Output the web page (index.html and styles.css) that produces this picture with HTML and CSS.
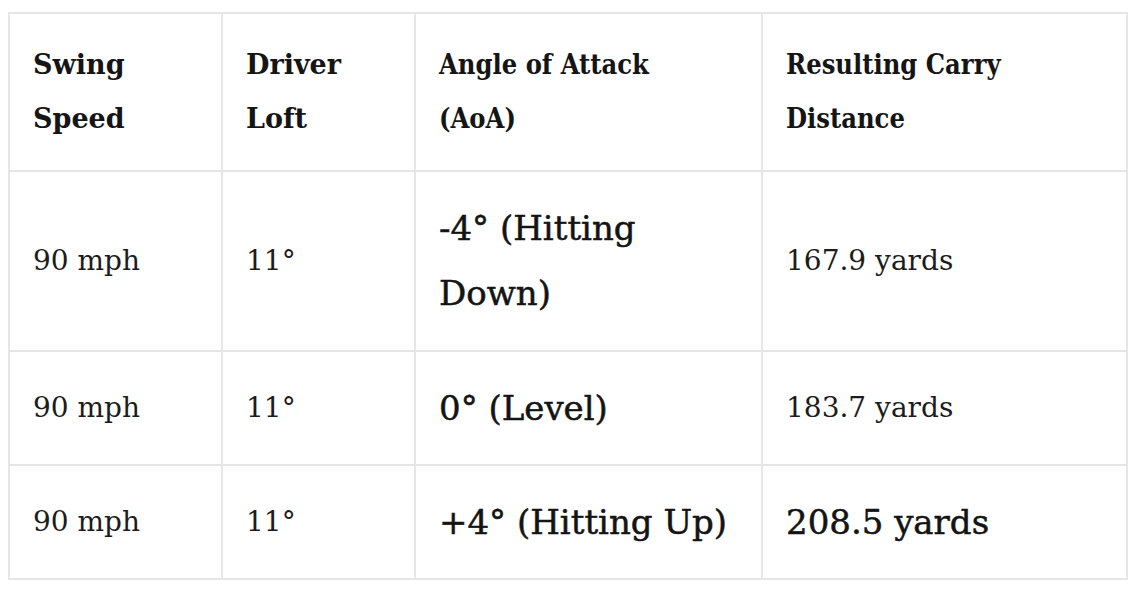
FILE: index.html
```html
<!DOCTYPE html>
<html lang="en">
<head>
<meta charset="utf-8">
<title>Angle of Attack</title>
<link rel="stylesheet" href="styles.css">
</head>
<body>
<table class="data">
  <colgroup>
    <col class="c1"><col class="c2"><col class="c3"><col class="c4">
  </colgroup>
  <thead>
    <tr>
      <th>Swing<br>Speed</th>
      <th>Driver<br>Loft</th>
      <th class="narrow">Angle of Attack<br>(AoA)</th>
      <th class="narrow">Resulting Carry<br>Distance</th>
    </tr>
  </thead>
  <tbody>
    <tr class="tall">
      <td>90 mph</td>
      <td>11°</td>
      <td class="big">-4° (Hitting<br>Down)</td>
      <td>167.9 yards</td>
    </tr>
    <tr class="short">
      <td>90 mph</td>
      <td>11°</td>
      <td class="big">0° (Level)</td>
      <td>183.7 yards</td>
    </tr>
    <tr class="short">
      <td>90 mph</td>
      <td>11°</td>
      <td class="big">+4° (Hitting Up)</td>
      <td class="big">208.5 yards</td>
    </tr>
  </tbody>
</table>
</body>
</html>
```
FILE: styles.css
```css
html, body {
  background: #ffffff;
}
body {
  margin: 12px 8px 8px 8px;
  font-family: "DejaVu Serif", "Liberation Serif", serif;
  color: #1c1c1c;
}
.data {
  width: 1118px;
  border-collapse: collapse;
  table-layout: fixed;
}
.c1 { width: 213px; }
.c2 { width: 193px; }
.c3 { width: 347px; }
.c4 { width: 365px; }
.data th,
.data td {
  border: 2px solid #e6e6e6;
  padding: 22px 23px;
  text-align: left;
  vertical-align: middle;
}
.data th {
  font-size: 27px;
  font-weight: bold;
  line-height: 54px;
  color: #151515;
}
.data th.narrow {
  font-family: "DejaVu Serif Condensed", "DejaVu Serif", serif;
  font-stretch: condensed;
}
.data td {
  font-size: 28px;
  line-height: 64px;
  font-variant-numeric: oldstyle-nums;
}
.data td.big {
  font-size: 34px;
  line-height: 65px;
  color: #141414;
  -webkit-text-stroke: 0.5px #141414;
}
thead tr { height: 158px; }
.tall { height: 180px; }
.short { height: 114px; }
```
